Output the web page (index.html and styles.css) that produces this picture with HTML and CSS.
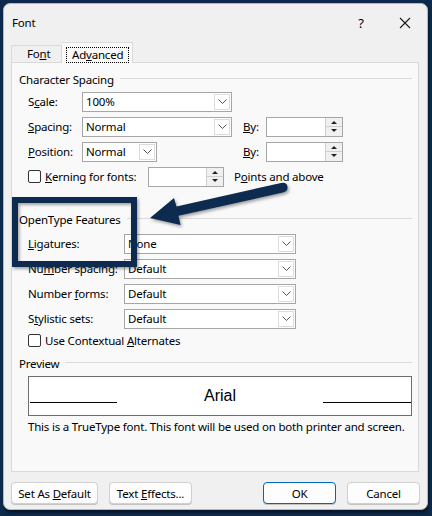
FILE: index.html
```html
<!DOCTYPE html>
<html lang="en">
<head>
    <meta charset="UTF-8">
    <meta name="viewport" content="width=device-width, initial-scale=1.0">
    <title>Font</title>
    <link rel="stylesheet" href="styles.css">
</head>
<body>

    <div class="dialog">
        <!-- title bar -->
        <div class="title-bar">
            <span class="title">Font</span>
            <span class="help">?</span>
            <span class="close">
                <svg width="12" height="12" viewBox="0 0 12 12"><path d="M1 1 L11 11 M11 1 L1 11" stroke="#1a1a1a" stroke-width="1.1" fill="none"/></svg>
            </span>
        </div>

        <!-- tabs -->
        <div class="tabs">
            <div class="tab">Fo<u>n</u>t</div>
            <div class="tab active"><span class="focus">Ad<u>v</u>anced</span></div>
        </div>

        <div class="panel">
            <!-- Character Spacing -->
            <div class="group-title"><span>Character Spacing</span></div>
            <div class="rows">
                <div class="row">
                    <span class="lbl short">S<u>c</u>ale:</span>
                    <div class="select w150"><span class="val">100%</span><span class="drop"><svg width="9" height="5" viewBox="0 0 9 5"><path d="M0.5 0.5 L4.5 4.5 L8.5 0.5" stroke="#555" fill="none"/></svg></span></div>
                </div>
                <div class="row">
                    <span class="lbl short"><u>S</u>pacing:</span>
                    <div class="select w150"><span class="val">Normal</span><span class="drop"><svg width="9" height="5" viewBox="0 0 9 5"><path d="M0.5 0.5 L4.5 4.5 L8.5 0.5" stroke="#555" fill="none"/></svg></span></div>
                    <span class="by gap11"><u>B</u>y:</span>
                    <div class="spin w77"><span class="val"></span><span class="arrows"><span class="up"></span><span class="down"></span></span></div>
                </div>
                <div class="row">
                    <span class="lbl short"><u>P</u>osition:</span>
                    <div class="select w75"><span class="val">Normal</span><span class="drop"><svg width="9" height="5" viewBox="0 0 9 5"><path d="M0.5 0.5 L4.5 4.5 L8.5 0.5" stroke="#555" fill="none"/></svg></span></div>
                    <span class="by gap86"><u>B</u>y:</span>
                    <div class="spin w77"><span class="val"></span><span class="arrows"><span class="up"></span><span class="down"></span></span></div>
                </div>
                <div class="row">
                    <span class="check"></span>
                    <span class="check-lbl kern"><u>K</u>erning for fonts:</span>
                    <div class="spin w76"><span class="val"></span><span class="arrows"><span class="up"></span><span class="down"></span></span></div>
                    <span class="after">P<u>o</u>ints and above</span>
                </div>
            </div>

            <!-- OpenType Features -->
            <div class="group-title second"><span>OpenType Features</span></div>
            <div class="rows ot">
                <div class="row">
                    <span class="lbl wide"><u>L</u>igatures:</span>
                    <div class="select w172"><span class="val">None</span><span class="drop"><svg width="9" height="5" viewBox="0 0 9 5"><path d="M0.5 0.5 L4.5 4.5 L8.5 0.5" stroke="#555" fill="none"/></svg></span></div>
                </div>
                <div class="row">
                    <span class="lbl wide">Nu<u>m</u>ber spacing:</span>
                    <div class="select w172"><span class="val">Default</span><span class="drop"><svg width="9" height="5" viewBox="0 0 9 5"><path d="M0.5 0.5 L4.5 4.5 L8.5 0.5" stroke="#555" fill="none"/></svg></span></div>
                </div>
                <div class="row">
                    <span class="lbl wide">Number <u>f</u>orms:</span>
                    <div class="select w172"><span class="val">Default</span><span class="drop"><svg width="9" height="5" viewBox="0 0 9 5"><path d="M0.5 0.5 L4.5 4.5 L8.5 0.5" stroke="#555" fill="none"/></svg></span></div>
                </div>
                <div class="row">
                    <span class="lbl wide">S<u>t</u>ylistic sets:</span>
                    <div class="select w172"><span class="val">Default</span><span class="drop"><svg width="9" height="5" viewBox="0 0 9 5"><path d="M0.5 0.5 L4.5 4.5 L8.5 0.5" stroke="#555" fill="none"/></svg></span></div>
                </div>
                <div class="row check-row">
                    <span class="check"></span>
                    <span class="check-lbl">Use Contextual <u>A</u>lternates</span>
                </div>
            </div>

            <!-- Preview -->
            <div class="group-title third"><span>Preview</span></div>
            <div class="preview">
                <span class="line left"></span>
                <span class="sample">Arial</span>
                <span class="line right"></span>
            </div>
            <div class="caption">This is a TrueType font. This font will be used on both printer and screen.</div>
        </div>

        <!-- bottom buttons -->
        <div class="buttons">
            <button class="btn w87">Set As <u>D</u>efault</button>
            <button class="btn w83">Text <u>E</u>ffects...</button>
            <span class="spacer"></span>
            <button class="btn w73 primary">OK</button>
            <button class="btn w73">Cancel</button>
        </div>
    </div>

    <!-- callout drawn over the dialog -->
    <svg class="callout" width="432" height="516" viewBox="0 0 432 516">
        <defs>
            <filter id="shadow" x="-20%" y="-20%" width="140%" height="140%">
                <feDropShadow dx="1.5" dy="2" stdDeviation="1.5" flood-color="#000" flood-opacity="0.35"/>
            </filter>
        </defs>
        <g filter="url(#shadow)" fill="#0c2a50" stroke="#0c2a50">
            <rect x="15" y="200" width="119" height="64" fill="none" stroke-width="6"/>
            <path d="M150 218 L174 198 L176.5 206.5 L281 183 Q287 182 287.5 187 Q288 191.5 283 192.5 L178.5 215.8 L180.5 225 Z" stroke="none"/>
        </g>
    </svg>

</body>
</html>
```

FILE: styles.css
```css
/* navy frame around the dialog */
body {
    margin: 0;
    width: 432px;
    height: 516px;
    padding: 3px 0 0 3px;
    box-sizing: border-box;
    background-color: #0d2a4d;
    font-family: "Noto Sans", sans-serif;
    font-size: 11.5px;
    letter-spacing: -0.2px;
    color: #000;
    position: relative;
    overflow: hidden;
}

.dialog {
    width: 425px;
    height: 507px;
    box-sizing: border-box;
    background-color: #f0f0f0;
    border: 1px solid #b8b8b8;
    border-radius: 7px;
    box-shadow: 1px 3px 3px rgba(0, 0, 0, 0.45);
    display: flex;
    flex-direction: column;
}

/* title bar */
.title-bar {
    height: 37px;
    display: flex;
    align-items: center;
    padding-left: 8px;
}

.title {
    flex: 1;
}

.help {
    width: 14px;
    text-align: center;
    font-size: 13px;
    margin-right: 31px;
}

.close {
    display: flex;
    margin-right: 16px;
}

/* tab strip */
.tabs {
    height: 21px;
    display: flex;
    align-items: flex-end;
    padding-left: 7px;
}

.tab {
    height: 17px;
    width: 51px;
    box-sizing: border-box;
    border: 1px solid #d9d9d9;
    border-bottom: none;
    padding-left: 15px;
    line-height: 16px;
}

.tab.active {
    height: 21px;
    width: 71px;
    border-left: none;
    background-color: #f9f9f9;
    padding: 5px 0 0 5px;
    line-height: 13px;
    position: relative;
    top: 1px;
}

.focus {
    display: inline-block;
    outline: 1px dotted #000;
    padding: 0 5px 0 5px;
    line-height: 14px;
}

/* tab page */
.panel {
    margin-left: 7px;
    width: 408px;
    height: 410px;
    box-sizing: border-box;
    border: 1px solid #d9d9d9;
    background-color: #f9f9f9;
    padding: 6px 6px 0 7px;
}

.group-title {
    height: 20px;
    display: flex;
    align-items: center;
}

.group-title::after {
    content: "";
    flex: 1;
    height: 1px;
    background-color: #dadada;
    margin: 0 0 1px 6px;
}

.group-title.second {
    margin-top: 20px;
}

.group-title.third {
    margin-top: 3px;
}

.rows {
    padding-left: 9px;
}

.rows.ot {
    margin-top: 2px;
}

.row {
    height: 25px;
    display: flex;
    align-items: center;
    white-space: nowrap;
}

.row.check-row {
    height: 19px;
}

.lbl.short {
    width: 54px;
}

.lbl.wide {
    width: 96px;
}

/* drop-down boxes */
.select,
.spin {
    height: 20px;
    box-sizing: border-box;
    border: 1px solid #a6a6a6;
    background-color: #fff;
    display: flex;
    flex-shrink: 0;
}

.val {
    flex: 1;
    padding-left: 3px;
    line-height: 18px;
}

.drop {
    width: 16px;
    margin: 1px;
    box-sizing: border-box;
    border: 1px solid #dcdcdc;
    display: flex;
    align-items: center;
    justify-content: center;
}

.w150 { width: 150px; }
.w75 { width: 75px; }
.w77 { width: 77px; }
.w76 { width: 76px; }
.w172 { width: 172px; }

.by {
    width: 23px;
}

.gap11 { margin-left: 11px; }
.gap86 { margin-left: 86px; }

/* up/down spinner */
.arrows {
    width: 16px;
    display: flex;
    flex-direction: column;
    border-left: 1px solid #cfcfcf;
    background-color: #f0f0f0;
}

.up,
.down {
    flex: 1;
    position: relative;
}

.up {
    border-bottom: 1px solid #cfcfcf;
}

.up::after,
.down::after {
    content: "";
    position: absolute;
    left: 5px;
    top: 3px;
    border-left: 3px solid transparent;
    border-right: 3px solid transparent;
}

.up::after {
    border-bottom: 3px solid #222;
}

.down::after {
    border-top: 3px solid #222;
    top: 2px;
}

/* check boxes */
.check {
    width: 13px;
    height: 13px;
    box-sizing: border-box;
    border: 1px solid #333;
    border-radius: 2px;
    background-color: #fff;
    margin-right: 4px;
    flex-shrink: 0;
}

.check-lbl.kern {
    width: 103px;
}

.after {
    margin-left: 10px;
}

/* preview box */
.preview {
    margin: 3px 0 0 9px;
    width: 384px;
    height: 40px;
    box-sizing: border-box;
    border: 1px solid #6e6e6e;
    background-color: #fff;
    display: flex;
    align-items: flex-end;
    padding: 0 0 12px 1px;
}

.line {
    height: 1px;
    background-color: #000;
}

.line.left { width: 87px; }
.line.right { width: 88px; }

.sample {
    flex: 1;
    text-align: center;
    font-family: "Liberation Sans", Arial, sans-serif;
    font-size: 16px;
    letter-spacing: 0;
    line-height: 18px;
    margin-bottom: -2px;
}

.caption {
    margin: 3px 0 0 9px;
    line-height: 16px;
    white-space: nowrap;
}

/* bottom buttons */
.buttons {
    display: flex;
    margin: 10px 0 0 7px;
    width: 409px;
}

.btn {
    height: 22px;
    box-sizing: border-box;
    border: 1px solid #d0d0d0;
    border-radius: 4px;
    background-color: #fdfdfd;
    font-family: "Noto Sans", sans-serif;
    font-size: 11.5px;
    letter-spacing: -0.2px;
    padding: 0;
    color: #000;
    box-shadow: 0 1px 0 #c4c4c4;
}

.w87 { width: 87px; }
.w83 { width: 83px; margin-left: 11px; }
.w73 { width: 73px; margin-left: 11px; }

.spacer {
    flex: 1;
}

.btn.primary {
    border-color: #0067c0;
}

.callout {
    position: absolute;
    left: 0;
    top: 0;
    pointer-events: none;
}
```
